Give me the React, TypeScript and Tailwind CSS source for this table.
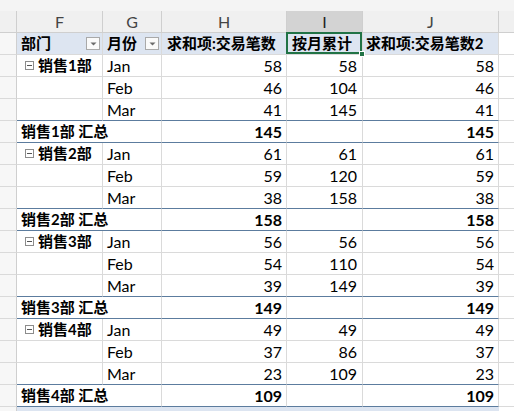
import React from 'react';

const cols = [
  { key: 'F', w: 'w-[86px]' },
  { key: 'G', w: 'w-[59px]' },
  { key: 'H', w: 'w-[125px]' },
  { key: 'I', w: 'w-[76px]' },
  { key: 'J', w: 'w-[136px]' },
];

type Row =
  | { type: 'month'; dept?: string; month: string; h: number; i: number; j: number; last?: boolean }
  | { type: 'total'; dept: string; h: number; j: number };

const data = [
  { dept: '销售1部', m: [[58, 58], [46, 104], [41, 145]], total: 145 },
  { dept: '销售2部', m: [[61, 61], [59, 120], [38, 158]], total: 158 },
  { dept: '销售3部', m: [[56, 56], [54, 110], [39, 149]], total: 149 },
  { dept: '销售4部', m: [[49, 49], [37, 86], [23, 109]], total: 109 },
];

const months = ['Jan', 'Feb', 'Mar'];

const rows: Row[] = data.flatMap((d) => [
  ...d.m.map(([v, acc], idx) => ({
    type: 'month' as const,
    dept: idx === 0 ? d.dept : undefined,
    month: months[idx],
    h: v,
    i: acc,
    j: v,
    last: idx === 2,
  })),
  { type: 'total' as const, dept: d.dept, h: d.total, j: d.total },
]);

const grid = 'border-[#dadada]';
const dark = 'border-b-[#5c7c9e]';
const cjk = 'text-[15px]';

function Collapse() {
  return (
    <svg width="9" height="9" viewBox="0 0 9 9" className="mr-[4px] shrink-0">
      <rect x="0.5" y="0.5" width="8" height="8" fill="#fff" stroke="#8c8c8c" />
      <line x1="2" y1="4.5" x2="7" y2="4.5" stroke="#555" />
    </svg>
  );
}

function Dropdown() {
  return (
    <span className="ml-auto mr-[2px] flex h-[13px] w-[14px] items-center justify-center border border-[#a9a9a9] bg-[#fafafa]">
      <svg width="7" height="4" viewBox="0 0 7 4">
        <path d="M0.5 0.5 L6.5 0.5 L3.5 3.5 Z" fill="#6b6b6b" />
      </svg>
    </span>
  );
}

function RowHead({ bottom = grid }: { bottom?: string }) {
  return <div className={`h-full w-[17px] shrink-0 border-r border-b border-r-[#cfcfcf] bg-[#f7f7f7] ${bottom}`} />;
}

function Tail() {
  return <div className={`h-full flex-1 border-b bg-white ${grid}`} />;
}

export default function App() {
  return (
    <div className="h-[411px] w-[514px] overflow-hidden bg-white font-['Lato','Noto_Sans_CJK_SC',sans-serif] text-[16px] leading-none text-black">
      {/* top strip */}
      <div className="h-[11px] bg-[#f4f4f4]" />

      {/* column letters */}
      <div className="flex h-[22px] bg-[#f0f0f0] text-[#444]">
        <div className="w-[17px] shrink-0 border-r border-b border-[#cfcfcf]" />
        {cols.map((c) => (
          <div
            key={c.key}
            className={`${c.w} flex shrink-0 items-center justify-center border-r border-b border-[#cfcfcf] ${
              c.key === 'I' ? 'bg-[#d3d3d3] text-[#222]' : ''
            }`}
          >
            {c.key}
          </div>
        ))}
        <div className="flex-1 border-b border-[#cfcfcf]" />
      </div>

      {/* pivot header */}
      <div className={`flex h-[22px] font-bold ${cjk}`}>
        <RowHead />
        <div className={`flex w-[86px] shrink-0 items-center border-r border-b bg-[#dde5f1] pl-[4px] ${grid}`}>
          部门
          <Dropdown />
        </div>
        <div className={`flex w-[59px] shrink-0 items-center border-r border-b bg-[#dde5f1] pl-[4px] ${grid}`}>
          月份
          <Dropdown />
        </div>
        <div className={`flex w-[125px] shrink-0 items-center border-r border-b bg-[#dde5f1] pl-[5px] ${grid}`}>
          求和项:交易笔数
        </div>
        <div className={`relative flex w-[76px] shrink-0 items-center border-r border-b bg-[#dde5f1] pl-[5px] ${grid}`}>
          按月累计
          <div className="pointer-events-none absolute -top-[1px] -left-[1px] right-0 bottom-0 border-2 border-[#217346]" />
          <div className="absolute -right-[3px] -bottom-[3px] h-[6px] w-[6px] border border-white bg-[#217346]" />
        </div>
        <div className={`flex w-[136px] shrink-0 items-center border-r border-b bg-[#dde5f1] pl-[3px] ${grid}`}>
          求和项:交易笔数2
        </div>
        <Tail />
      </div>

      {rows.map((r, idx) => {
        if (r.type === 'total') {
          return (
            <div key={idx} className="flex h-[22px] font-bold">
              <RowHead />
              <div className={`flex w-[145px] shrink-0 items-center border-r border-b pl-[4px] ${cjk} ${grid} ${dark}`}>
                {r.dept} 汇总
              </div>
              <div className={`flex w-[125px] shrink-0 items-center justify-end border-r border-b pr-[4px] ${grid} ${dark}`}>
                {r.h}
              </div>
              <div className={`w-[76px] shrink-0 border-r border-b ${grid} ${dark}`} />
              <div className={`flex w-[136px] shrink-0 items-center justify-end border-r border-b pr-[4px] ${grid} ${dark}`}>
                {r.j}
              </div>
              <Tail />
            </div>
          );
        }
        const b = r.last ? dark : '';
        return (
          <div key={idx} className="flex h-[22px]">
            <RowHead />
            <div className={`flex w-[86px] shrink-0 items-center border-r border-b pl-[8px] font-bold ${cjk} ${grid} ${b}`}>
              {r.dept && (
                <>
                  <Collapse />
                  {r.dept}
                </>
              )}
            </div>
            <div className={`flex w-[59px] shrink-0 items-center border-r border-b pl-[4px] ${grid} ${b}`}>{r.month}</div>
            <div className={`flex w-[125px] shrink-0 items-center justify-end border-r border-b pr-[4px] ${grid} ${b}`}>
              {r.h}
            </div>
            <div className={`flex w-[76px] shrink-0 items-center justify-end border-r border-b pr-[5px] ${grid} ${b}`}>
              {r.i}
            </div>
            <div className={`flex w-[136px] shrink-0 items-center justify-end border-r border-b pr-[4px] ${grid} ${b}`}>
              {r.j}
            </div>
            <Tail />
          </div>
        );
      })}

      {/* grand total edge */}
      <div className="flex h-[22px]">
        <RowHead />
        <div className="w-[482px] shrink-0 bg-[#dde5f1]" />
        <Tail />
      </div>
    </div>
  );
}
